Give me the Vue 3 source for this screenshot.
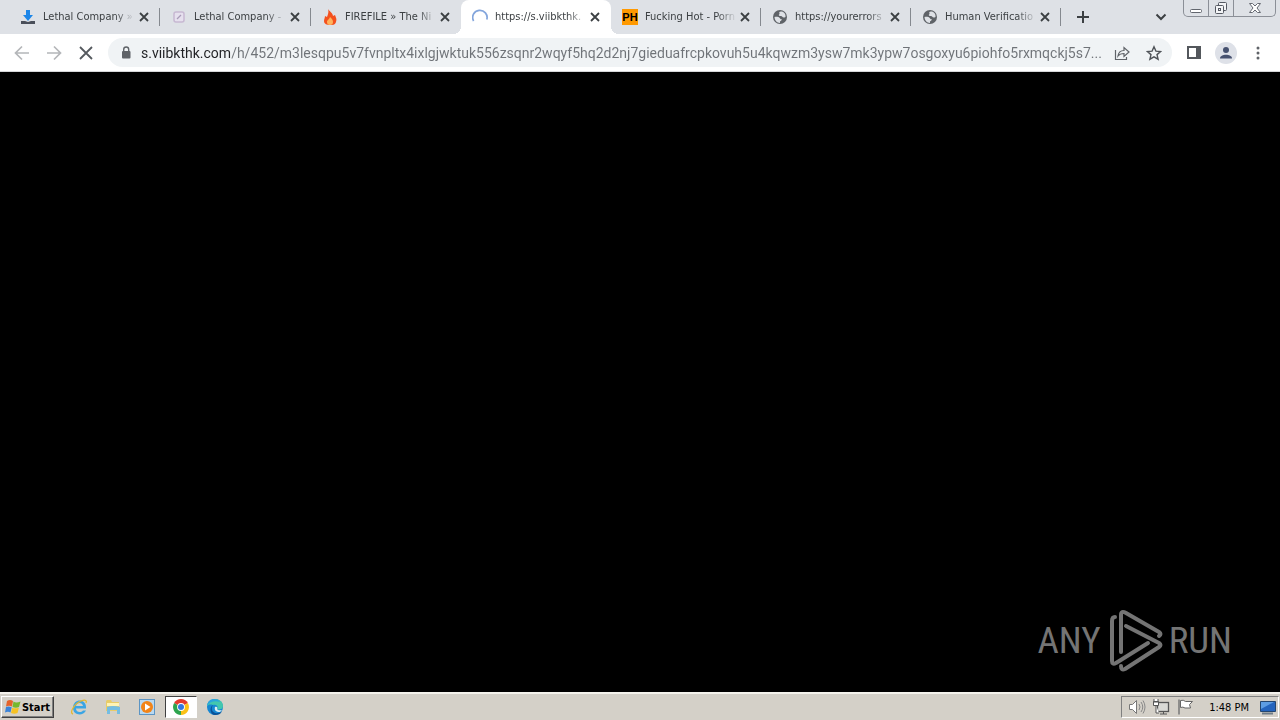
<script setup>
import { ref } from 'vue'

const tabs = [
  { id: 1, title: 'Lethal Company »', icon: 'download', wide: true, sep: true },
  { id: 2, title: 'Lethal Company -', icon: 'gauge', wide: true, sep: true },
  { id: 3, title: 'FIREFILE » The Ni', icon: 'fire' },
  { id: 4, title: 'https://s.viibkthk.', icon: 'spinner', active: true },
  { id: 5, title: 'Fucking Hot - Porn', icon: 'ph', sep: true },
  { id: 6, title: 'https://yourerrors', icon: 'globe', sep: true },
  { id: 7, title: 'Human Verificatio', icon: 'globe', sep: true }
]
const url = ref('s.viibkthk.com/h/452/m3lesqpu5v7fvnpltx4ixlgjwktuk556zsqnr2wqyf5hq2d2nj7gieduafrcpkovuh5u4kqwzm3ysw7mk3ypw7osgoxyu6piohfo5rxmqckj5s7...')
</script>

<template>
  <div class="screen">
    <header class="strip">
      <nav class="tabs" aria-label="Tabs">
        <div v-for="t in tabs" :key="t.id" class="tab" :class="{ active: t.active, wide: t.wide, sep: t.sep }">
          <svg v-if="t.icon === 'download'" class="fav" viewBox="0 0 16 16">
            <path d="M1 12h4l3 1 3-1h4v3H1z" fill="#4a4f5a" />
            <path d="M6 1h4v5h3l-5 6-5-6h3z" fill="#1c86e8" />
          </svg>
          <svg v-else-if="t.icon === 'gauge'" class="fav" viewBox="0 0 16 16">
            <rect x="3" y="3" width="10" height="10" rx="2" fill="#e6e0ee" stroke="#c7b8d2" stroke-width="1.5" />
            <path d="M6 10l4-4" stroke="#a99bb8" stroke-width="1.3" />
          </svg>
          <svg v-else-if="t.icon === 'fire'" class="fav" viewBox="0 0 16 16">
            <path d="M6 0c1 2 5 4 5 7l2-1c1 3 2 4 1 7s-3 3-6 3-6-1-6-4c0-2 1-3 1-5l2 1c1-3 2-5 1-8z" fill="#f4511e" />
            <path d="M8 8c2 2 3 3 3 5s-1 3-3 3-3-1-3-3 2-2 3-5z" fill="#ffb35c" />
          </svg>
          <svg v-else-if="t.icon === 'spinner'" class="fav" viewBox="0 0 16 16">
            <path d="M1.6 12A7.2 7.2 0 1 1 14.8 10.5" fill="none" stroke="#83a5dc" stroke-width="1.7" />
          </svg>
          <span v-else-if="t.icon === 'ph'" class="fav ph">PH</span>
          <svg v-else class="fav" viewBox="0 0 16 16">
            <circle cx="8" cy="8" r="7" fill="#5f6368" />
            <path d="M2.500 8c2-.3 4-.3 5 .7s1 1.500 2 1.500-.5 2-1.500 2V14C5 14 2.500 11 2.500 8zM9 2.500c-2 0-2 1-1.500 2s-1.500 1-.5 2 2 0 3 1 1.500 1.500 3.500.5C14 5 12 2.500 9 2.500z" fill="#dee1e6" />
          </svg>
          <span class="title">{{ t.title }}</span>
          <button class="close" :aria-label="'Close ' + t.title">
            <svg viewBox="0 0 10 10"><path d="M1 1l8 8M9 1L1 9" stroke="#3c4043" stroke-width="1.8" /></svg>
          </button>
        </div>
      </nav>
      <button class="plus" aria-label="New tab">
        <svg viewBox="0 0 14 14"><path d="M7 1v12M1 7h12" stroke="#3c4043" stroke-width="2" /></svg>
      </button>
      <button class="chev" aria-label="Search tabs">
        <svg viewBox="0 0 12 12"><path d="M1.500 3.500L6 8l4.500-4.500" fill="none" stroke="#3c4043" stroke-width="2" /></svg>
      </button>
      <div class="win">
        <button aria-label="Minimize">
          <svg width="14" height="14" viewBox="0 0 14 14"><rect x="1.500" y="8.500" width="11" height="3" rx="1" fill="#fff" stroke="#62666e" /></svg>
        </button>
        <button aria-label="Restore">
          <svg width="14" height="14" viewBox="0 0 14 14"><g fill="#f3f4f6" stroke="#555962"><rect x="4.500" y="1.500" width="8" height="8" rx="1" /><rect x="1.500" y="4.500" width="8" height="8" rx="1" /><rect x="4.500" y="7.500" width="2" height="2" /></g></svg>
        </button>
        <button class="wide-btn" aria-label="Close window">
          <svg width="14" height="14" viewBox="0 0 14 14"><path d="M1.500 2.500h3L7 5l2.500-2.500h3L9 7l3.500 4.500h-3L7 9l-2.500 2.500h-3L5 7z" fill="#fff" stroke="#666a73" /></svg>
        </button>
      </div>
    </header>

    <div class="toolbar">
      <button class="tool" aria-label="Back">
        <svg viewBox="0 0 16 16"><path d="M15 8H2M8 1.500L1.500 8 8 14.500" fill="none" stroke="#b4b6b9" stroke-width="1.7" /></svg>
      </button>
      <button class="tool" aria-label="Forward">
        <svg viewBox="0 0 16 16"><path d="M1 8h13M8 1.500L14.500 8 8 14.500" fill="none" stroke="#b4b6b9" stroke-width="1.7" /></svg>
      </button>
      <button class="tool" aria-label="Stop">
        <svg viewBox="0 0 16 16"><path d="M2 2l12 12M14 2L2 14" stroke="#55595e" stroke-width="1.800" /></svg>
      </button>
      <div class="omni">
        <svg class="lock" viewBox="0 0 10 14"><rect x="1" y="5" width="8.500" height="7.500" rx="1" fill="#5f6368" /><path d="M2.700 6V3.500a2.500 2.500 0 0 1 5 0V6" fill="none" stroke="#5f6368" stroke-width="1.400" /></svg>
        <input v-model="url" class="url" type="text" aria-label="Address" spellcheck="false" />
        <button class="tool" aria-label="Share">
          <svg viewBox="0 0 16 16"><path d="M1.500 5v9.500h11V12M4 11c.5-4 3-5.500 6-5.500V2.500L15 7l-5 4.500V8.500C7.500 8.500 5.500 9 4 11z" fill="none" stroke="#5f6368" stroke-width="1.200" /></svg>
        </button>
        <button class="tool" aria-label="Bookmark">
          <svg viewBox="0 0 16 16"><path d="M8 1.800l1.900 4.300 4.700.4L11 9.600l1.100 4.600L8 11.800l-4.100 2.400L5 9.600 1.400 6.500l4.700-.4z" fill="none" stroke="#4f5358" stroke-width="1.400" /></svg>
        </button>
      </div>
      <button class="tool panel" aria-label="Side panel">
        <svg viewBox="0 0 16 16"><path d="M1 1h14v13H1zM3 3v9h7V3z" fill="#53575c" fill-rule="evenodd" /></svg>
      </button>
      <button class="tool" aria-label="Profile">
        <svg class="avatar" viewBox="0 0 22 22"><circle cx="11" cy="11" r="11" fill="#dee1e8" /><circle cx="11" cy="8" r="3" fill="#46516f" /><path d="M5 16.500c0-5 12-5 12 0z" fill="#46516f" /></svg>
      </button>
      <button class="tool" aria-label="Menu">
        <svg viewBox="0 0 16 16" fill="#5f6368"><circle cx="8" cy="3" r="1.500" /><circle cx="8" cy="8" r="1.500" /><circle cx="8" cy="13" r="1.500" /></svg>
      </button>
    </div>

    <main class="page">
      <div class="brand">
        <span>ANY</span>
        <svg viewBox="0 0 56 64">
          <g fill="none" stroke="#747474" stroke-width="4" stroke-linejoin="round" stroke-linecap="round">
            <path d="M7 8Q4 8 4 12V52Q4 56 8 54L40 34" />
            <path d="M13 43V6Q13 1 18 4L51 23Q54 25 51 27" />
            <path d="M18 17L51 34Q54 36 51 38L17 60Q13 62 13 57" />
          </g>
        </svg>
        <span>RUN</span>
      </div>
    </main>

    <footer class="taskbar">
      <button class="start">
        <svg viewBox="0 0 16 16">
          <path d="M2 2Q5 0 8 2L7 7.500Q4 6 1 7.500z" fill="#e5632a" />
          <path d="M8.500 2.500Q11 4.500 15.500 2.500L14 8Q11 9.500 7.500 8z" fill="#76b82e" />
          <path d="M1 8Q3.500 7 6.700 8.200L5.500 13.500Q3 12 0 13.500z" fill="#3b83d8" />
          <path d="M7.200 8.700Q10 10 13.900 8.700L12.500 14Q9.500 15.500 6 14z" fill="#f6c224" />
        </svg>
        Start
      </button>
      <div class="quick">
        <button aria-label="Internet Explorer">
          <svg viewBox="0 0 18 18"><path d="M16 10.500H6c0 4 5 4.500 7 2h3c-3 6-13 5-13-2.500C3 0 17 0 16 10.500zM6 8h7c-.5-4-6.500-4-7 0z" fill="#3ba5e4" /><path d="M3 16c-4-1 1-10 8-13 5-2 6 0 5 2" fill="none" stroke="#e5b82e" stroke-width="1.300" /></svg>
        </button>
        <button aria-label="Explorer">
          <svg viewBox="0 0 18 18"><path d="M2 3l1-1h4l1 2h7v9H2z" fill="#e8cc69" /><path d="M3 5h12v3H3z" fill="#fff3b5" /><path d="M3 9q6-2 13 0v7h-3v-4H6v4H3z" fill="#75bde2" /></svg>
        </button>
        <button aria-label="Media Player">
          <svg viewBox="0 0 18 18"><rect x="1.500" y="1.500" width="15" height="15" fill="#b9d9f1" stroke="#5c95c4" /><circle cx="9" cy="9" r="6" fill="#f28418" /><path d="M7 5.500l5.500 3.500L7 12.500z" fill="#fff" /></svg>
        </button>
        <button class="pressed" aria-label="Chrome">
          <svg viewBox="0 0 18 18"><path d="M9 9L2.100 5A8 8 0 0 1 15.900 5z" fill="#e33b2e" /><path d="M9 9l6.900-4A8 8 0 0 1 9 17z" fill="#fbc116" /><path d="M9 9v8A8 8 0 0 1 2.100 5z" fill="#2da44e" /><circle cx="9" cy="9" r="3.900" fill="#fff" /><circle cx="9" cy="9" r="3" fill="#3277e0" /></svg>
        </button>
        <button aria-label="Edge">
          <svg viewBox="0 0 18 18"><circle cx="9" cy="9" r="8" fill="#1687d2" /><path d="M1 8C2-1 17-1 17 8c0 4-5 4-6 3 2-3-1-5-4-4-3-1-5 0-6 1z" fill="#43c7ae" /><path d="M1 8C2-1 12 0 14 4 9 2 3 4 1 8z" fill="#2aa5dd" /><path d="M7 7c-3 4 0 9 5 8 2 0 3-1 4-2-1 3-4 4-7 4C4 17 3 9 7 7z" fill="#0b5297" /><path d="M9 9c2-1 3 1 2 2 1 2 4 1 5 1l-2 2c-4 0-6-2-5-5z" fill="#dceef4" /></svg>
        </button>
      </div>
      <div class="tray">
        <svg viewBox="0 0 18 18"><path d="M1.500 6.500h3l4-4v13l-4-4h-3z" fill="#fff" stroke="#777" /><path d="M11 6q2 3 0 6M13 4q3.500 5 0 10M15 2.500q4 6.500 0 13" fill="none" stroke="#888" /></svg>
        <svg viewBox="0 0 18 18"><rect x="5.500" y="4.500" width="11" height="9" fill="#d9d9d5" stroke="#555" stroke-width="1.300" /><path d="M8 16h7M11.500 13v3" stroke="#555" /><path d="M2 1v3h4V1M1.500 3.500h5v4h-5zM4 7v8h3" fill="#fff" stroke="#555" /></svg>
        <svg viewBox="0 0 18 18"><path d="M3 1.500v15" stroke="#777" stroke-width="1.500" /><path d="M4.500 2.500q3-1 5 1h7l-3 3 1 3.500H9q-2-1.500-4.500-.5z" fill="#fff" stroke="#666" /></svg>
        <time>1:48 PM</time>
        <svg class="desk" viewBox="0 0 18 18"><path d="M1.500 3.500h15v10h-15z" fill="#2464bd" stroke="#24466f" /><path d="M2 4h13L2 11z" fill="#5d9de3" /><path d="M3 15.500h11" stroke="#6f7c87" stroke-width="2" /></svg>
      </div>
    </footer>
  </div>
</template>

<style>
body { margin: 0; background: #000; }
</style>

<style scoped>
.screen { display: flex; flex-direction: column; height: 100vh; overflow: hidden; font-family: "DejaVu Sans Condensed", "DejaVu Sans", sans-serif; font-size: 11px; color: #3c4043; }
button { display: flex; align-items: center; justify-content: center; padding: 0; border: 0; background: none; font: inherit; color: inherit; flex: none; }
svg { display: block; flex: none; }
.strip { display: flex; height: 34px; background: #dee1e6; padding-left: 9px; flex: none; }
.tabs { display: flex; }
.tab { position: relative; box-sizing: border-box; display: flex; align-items: center; width: 150px; padding: 0 8px 0 11px; }
.tab.wide { width: 151px; }
.tab.sep::after { content: ""; position: absolute; right: 0; top: 8px; width: 1px; height: 18px; background: #85898f; }
.tab.active { background: #fff; border-radius: 8px 8px 0 0; }
.tab.active::before, .tab.active::after { content: ""; position: absolute; bottom: 0; width: 8px; height: 8px; }
.tab.active::before { right: 100%; background: radial-gradient(circle at 0 0, transparent 8px, #fff 8px); }
.tab.active::after { left: 100%; background: radial-gradient(circle at 100% 0, transparent 8px, #fff 8px); }
.fav { width: 16px; height: 16px; margin-right: 7px; flex: none; }
.ph { background: #f90; color: #000; font: bold 11px/16px "Liberation Sans", sans-serif; text-align: center; }
.title { flex: 1; min-width: 0; overflow: hidden; white-space: nowrap; line-height: 16px; mask-image: linear-gradient(to right, #000 72px, transparent 92px); }
.close { width: 16px; height: 16px; }
.close svg { width: 10px; height: 10px; }
.plus { width: 28px; margin-left: 8px; }
.plus svg { width: 14px; height: 14px; }
.chev { width: 28px; margin-left: auto; margin-right: 8px; }
.chev svg { width: 12px; height: 12px; }
.win { display: flex; box-sizing: border-box; height: 17px; margin-right: 4px; border: 1px solid #8b8f97; border-top: 0; border-radius: 0 0 5px 5px; }
.win button { width: 25px; border-right: 1px solid #8b8f97; box-sizing: border-box; }
.win .wide-btn { width: 41px; border-right: 0; }
.toolbar { display: flex; align-items: center; box-sizing: border-box; height: 38px; padding: 0 6px; background: #fff; border-bottom: 1px solid #d5d6d8; flex: none; }
.tool { width: 32px; height: 32px; }
.tool svg { width: 16px; height: 16px; }
.tool .avatar { width: 22px; height: 22px; }
.panel { margin-left: 6px; }
.omni { display: flex; align-items: center; flex: 1; min-width: 0; height: 29px; margin-left: 6px; padding-left: 13px; padding-right: 2px; border-radius: 15px; background: #f0f3f5; }
.lock { width: 10px; height: 14px; }
.url { flex: 1; min-width: 0; height: 24px; margin: 0 4px 0 10px; padding: 0; border: 0; outline: 0; font: 14px/24px "Roboto", sans-serif; color: transparent; background: linear-gradient(to right, #202124 89px, #6f7378 89px); background-clip: text; -webkit-background-clip: text; }
.page { display: flex; flex: 1; min-height: 0; align-items: flex-end; justify-content: flex-end; background: #000; }
.brand { display: flex; align-items: center; margin: 0 48px 19px 0; color: #747474; font: 37px/64px "Roboto Condensed", "Open Sans Condensed", sans-serif; }
.brand svg { width: 56px; height: 64px; margin: 0 5px 0 7px; }
.taskbar { display: flex; align-items: center; box-sizing: border-box; height: 28px; padding: 0 1px; background: #d4d0c8; border-top: 2px solid #f4f2ec; color: #000; flex: none; }
.start { box-sizing: border-box; width: 53px; height: 22px; gap: 1px; border: 1px solid; border-color: #fff #404040 #404040 #fff; box-shadow: inset -1px -1px #808080; font-weight: bold; }
.start svg { width: 16px; height: 16px; }
.quick { display: flex; gap: 2px; margin-left: 9px; }
.quick button { box-sizing: border-box; width: 32px; height: 22px; }
.quick svg { width: 18px; height: 18px; }
.quick .pressed { background: #fff; border: 1px solid; border-color: #404040 #fff #fff #404040; }
.tray { display: flex; align-items: center; box-sizing: border-box; height: 22px; gap: 6px; margin-left: auto; padding: 0 1px 0 6px; border: 1px solid; border-color: #808080 #fff #fff #808080; }
.tray svg { width: 18px; height: 18px; }
.tray time { margin-left: 9px; margin-right: 4px; }
</style>
